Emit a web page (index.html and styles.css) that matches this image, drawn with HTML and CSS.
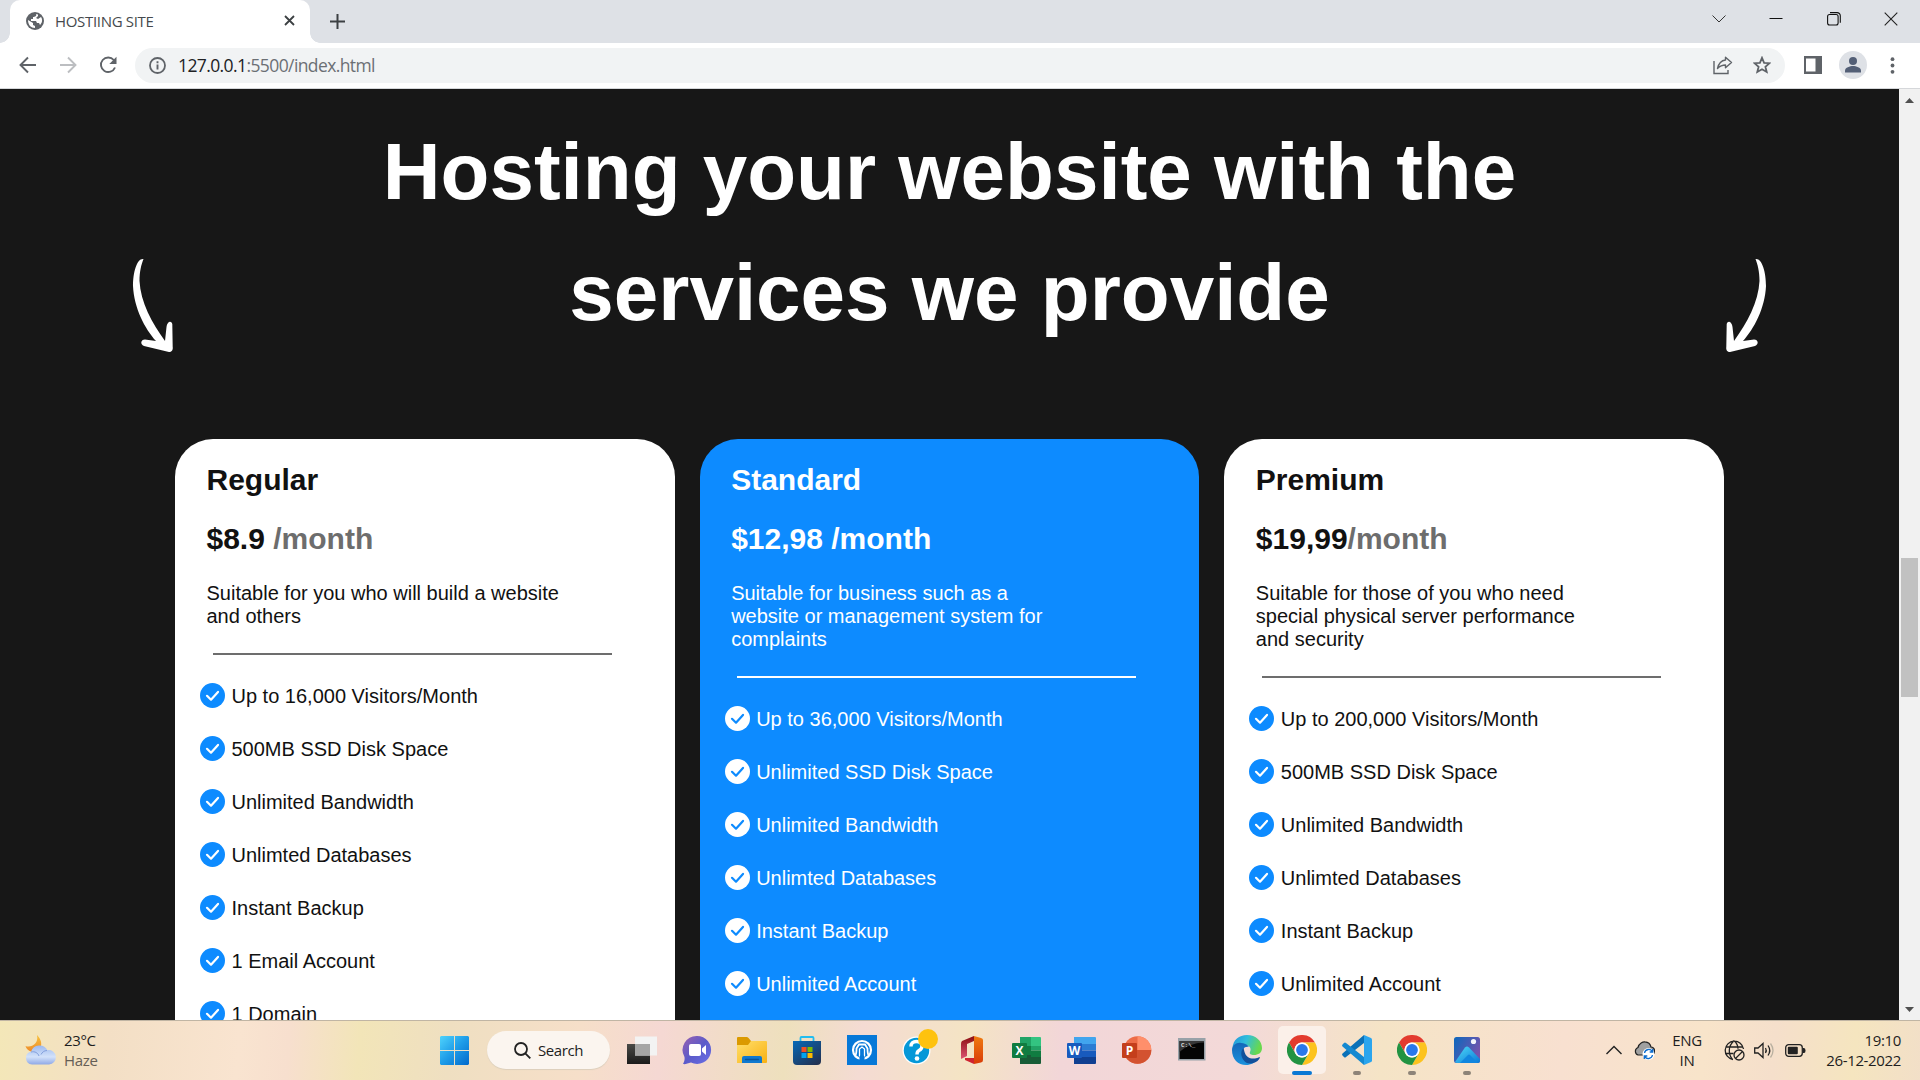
FILE: index.html
```html
<!DOCTYPE html>
<html lang="en">
<head>
<meta charset="utf-8">
<title>HOSTIING SITE</title>
<link rel="stylesheet" href="styles.css">
</head>
<body>
<svg width="0" height="0" class="defs">
  <symbol id="check" viewBox="0 0 25 25"><circle cx="12.500" cy="12.500" r="12.500" fill="var(--disc)"/><path d="M7 12.800l4 3.900 7-7.800" fill="none" stroke="var(--tick)" stroke-width="2.200" stroke-linecap="round" stroke-linejoin="round"/></symbol>
  <symbol id="chrome" viewBox="0 0 30 30">
    <path d="M2 7.500A15 15 0 0 1 28 7.500H15A7.500 7.500 0 0 0 8.500 18.750Z" fill="#e33b2e"/>
    <path d="M28 7.500A15 15 0 0 1 15 30L21.500 18.750A7.500 7.500 0 0 0 15 7.500Z" fill="#fcc31e"/>
    <path d="M15 30A15 15 0 0 1 2 7.500L8.500 18.750A7.500 7.500 0 0 0 21.500 18.750Z" fill="#229342"/>
    <circle cx="15" cy="15" r="7.500" fill="#fff"/><circle cx="15" cy="15" r="5.900" fill="#2a78ea"/>
  </symbol>
  <symbol id="arrow" viewBox="0 0 90 130"><path d="M33.500 19C27 18 23 32 23 46C24 68 35 89 46 101L35 99.500C30.500 99.500 30 104.500 34 106L59 112C61.500 112 63.200 110 62.700 107L62.300 84C61 80 57 82 56.500 87L55 101C42 83 30.500 62 29.500 41C29.500 31 31.500 24 33.500 19Z" fill="#fff"/></symbol>
</svg>

<header class="tabstrip">
  <div class="tab">
    <svg class="favicon" width="18" height="18" viewBox="0 0 18 18"><circle cx="9" cy="9" r="9" fill="#5f6368"/><path d="M2 8l5 3v2l2 1v2C5 16 2 13 2 8ZM10 2c1 2-1 3-3 3v2H5v2h5l1 2h2l1 2c2-2 3-5 1-8l-3 2-2-1 2-2V2.500Z" fill="#fff"/></svg>
    <span class="tab-title">HOSTIING SITE</span>
    <svg width="11" height="11" viewBox="0 0 11 11"><path d="M1 1l9 9M10 1l-9 9" stroke="#3c4043" stroke-width="1.800"/></svg>
  </div>
  <svg class="newtab" width="15" height="15" viewBox="0 0 15 15"><path d="M7.500 0v15M0 7.500h15" stroke="#3c4043" stroke-width="2"/></svg>
  <div class="winctl">
    <svg width="14" height="14" viewBox="0 0 14 14"><path d="M.5 3.500L7 10l6.500-6.500" fill="none" stroke="#333" stroke-width="1"/></svg>
    <svg width="14" height="14" viewBox="0 0 14 14"><path d="M.5 6.500h13" stroke="#111" stroke-width="1"/></svg>
    <svg width="14" height="14" viewBox="0 0 14 14"><rect x=".6" y="2.500" width="10.500" height="10.500" rx="2" fill="none" stroke="#111" stroke-width="1.100"/><path d="M3 .6h7a3.200 3.200 0 0 1 3.300 3.200v7" fill="none" stroke="#111" stroke-width="1.100"/></svg>
    <svg width="14" height="14" viewBox="0 0 14 14"><path d="M.7.700l12.600 12.600M13.300.700L.7 13.300" stroke="#222" stroke-width="1.100"/></svg>
  </div>
</header>

<nav class="toolbar">
  <div class="navbtns">
    <svg width="18" height="18" viewBox="0 0 18 18"><path d="M17 9H2M9 1.500L1.500 9 9 16.500" fill="none" stroke="#5f6368" stroke-width="1.900"/></svg>
    <svg width="18" height="18" viewBox="0 0 18 18"><path d="M1 9h15M9 1.500L16.500 9 9 16.500" fill="none" stroke="#bcbec1" stroke-width="1.900"/></svg>
    <svg width="18" height="18" viewBox="0 0 18 18"><path d="M14.800 4A7.300 7.300 0 1 0 16 11.500" fill="none" stroke="#5f6368" stroke-width="1.900"/><path d="M17.500.800V8h-7.200Z" fill="#5f6368"/></svg>
  </div>
  <div class="omnibox">
    <svg width="17" height="17" viewBox="0 0 17 17"><circle cx="8.500" cy="8.500" r="7.500" fill="none" stroke="#5f6368" stroke-width="1.800"/><path d="M8.500 7.500v5M8.500 4.300v2" stroke="#5f6368" stroke-width="1.900"/></svg>
    <span class="url"><b>127.0.0.1</b>:5500/index.html</span>
    <svg class="share" width="20" height="19" viewBox="0 0 20 19"><path d="M1 5v12.500h14V14" fill="none" stroke="#5f6368" stroke-width="1.400"/><path d="M12.500 1.200L18.500 6.500l-6 5.300V9C9 9 7 10 4.500 12.500 5.500 8 8 4.500 12.500 4Z" fill="none" stroke="#5f6368" stroke-width="1.400" stroke-linejoin="round"/></svg>
    <svg width="18" height="18" viewBox="0 0 18 18"><path d="M9 1.800l2.100 5 5.400.400-4.100 3.500 1.300 5.300L9 13.200 4.300 16l1.300-5.300L1.500 7.200 6.900 6.800Z" fill="none" stroke="#5f6368" stroke-width="1.800"/></svg>
  </div>
  <svg class="panel" width="18" height="18" viewBox="0 0 18 18"><path d="M0 0h18v18H0ZM2 2.500v13h9.500v-13Z" fill="#5f6368" fill-rule="evenodd"/></svg>
  <svg class="avatar" width="28" height="28" viewBox="0 0 28 28"><circle cx="14" cy="14" r="14" fill="#dee1e6"/><circle cx="14" cy="10" r="4" fill="#535f76"/><path d="M6 21.500v-2c0-3 5-4.500 8-4.500s8 1.500 8 4.500v2Z" fill="#535f76"/></svg>
  <svg class="dots" width="5" height="17" viewBox="0 0 5 17"><g fill="#5f6368"><circle cx="2.500" cy="2.200" r="1.900"/><circle cx="2.500" cy="8.500" r="1.900"/><circle cx="2.500" cy="14.800" r="1.900"/></g></svg>
</nav>

<div class="viewport">
  <main class="page">
    <section class="hero">
      <svg class="arrow" width="90" height="130"><use href="#arrow"/></svg>
      <h1>Hosting your website with the<br>services we provide</h1>
      <svg class="arrow flip" width="90" height="130"><use href="#arrow"/></svg>
    </section>
    <section class="plans">
      <article class="card">
        <h2>Regular</h2>
        <p class="price">$8.9 <span>/month</span></p>
        <p class="desc">Suitable for you who will build a website<br>and others</p>
        <div class="rule"></div>
        <ul>
          <li><svg><use href="#check"/></svg><span>Up to 16,000 Visitors/Month</span></li>
          <li><svg><use href="#check"/></svg><span>500MB SSD Disk Space</span></li>
          <li><svg><use href="#check"/></svg><span>Unlimited Bandwidth</span></li>
          <li><svg><use href="#check"/></svg><span>Unlimted Databases</span></li>
          <li><svg><use href="#check"/></svg><span>Instant Backup</span></li>
          <li><svg><use href="#check"/></svg><span>1 Email Account</span></li>
          <li><svg><use href="#check"/></svg><span>1 Domain</span></li>
        </ul>
      </article>
      <article class="card featured">
        <h2>Standard</h2>
        <p class="price">$12,98 <span>/month</span></p>
        <p class="desc">Suitable for business such as a<br>website or management system for<br>complaints</p>
        <div class="rule"></div>
        <ul>
          <li><svg><use href="#check"/></svg><span>Up to 36,000 Visitors/Month</span></li>
          <li><svg><use href="#check"/></svg><span>Unlimited SSD Disk Space</span></li>
          <li><svg><use href="#check"/></svg><span>Unlimited Bandwidth</span></li>
          <li><svg><use href="#check"/></svg><span>Unlimted Databases</span></li>
          <li><svg><use href="#check"/></svg><span>Instant Backup</span></li>
          <li><svg><use href="#check"/></svg><span>Unlimited Account</span></li>
        </ul>
      </article>
      <article class="card">
        <h2>Premium</h2>
        <p class="price">$19,99<span>/month</span></p>
        <p class="desc">Suitable for those of you who need<br>special physical server performance<br>and security</p>
        <div class="rule"></div>
        <ul>
          <li><svg><use href="#check"/></svg><span>Up to 200,000 Visitors/Month</span></li>
          <li><svg><use href="#check"/></svg><span>500MB SSD Disk Space</span></li>
          <li><svg><use href="#check"/></svg><span>Unlimited Bandwidth</span></li>
          <li><svg><use href="#check"/></svg><span>Unlimted Databases</span></li>
          <li><svg><use href="#check"/></svg><span>Instant Backup</span></li>
          <li><svg><use href="#check"/></svg><span>Unlimited Account</span></li>
        </ul>
      </article>
    </section>
  </main>
  <div class="scrollbar">
    <svg width="9" height="5" viewBox="0 0 9 5"><path d="M4.500 0L9 5H0Z" fill="#505050"/></svg>
    <div class="thumb"></div>
    <svg width="9" height="5" viewBox="0 0 9 5"><path d="M4.500 5L9 0H0Z" fill="#505050"/></svg>
  </div>
</div>

<footer class="taskbar">
  <div class="weather">
    <svg width="31" height="30" viewBox="0 0 31 30"><defs><linearGradient id="cl" x2="0" y2="1"><stop stop-color="#9db9ee"/><stop offset=".6" stop-color="#d3e2fa"/><stop offset="1" stop-color="#8fa9e6"/></linearGradient><linearGradient id="mo" x2="0" y2="1"><stop stop-color="#f8c13a"/><stop offset="1" stop-color="#ec8a2b"/></linearGradient></defs><path d="M12 0c3 3 5 7 4 11-1 4-5 6-9 6-3-1-6-3-6.500-6C6 13 14 9 12 0Z" fill="url(#mo)"/><path d="M7 29.500a6.500 6.500 0 0 1-1-12.800A9 9 0 0 1 22.500 15.200 7.200 7.200 0 1 1 24 29.500Z" fill="url(#cl)"/><path d="M6 17c4-1 7 1 8 4M22 15.500c-3 0-5 2-6 4" fill="none" stroke="#84a0dc"/></svg>
    <div class="wtext"><span>23°C</span><span class="muted">Haze</span></div>
  </div>
  <svg class="start" width="29" height="29" viewBox="0 0 29 29"><defs><linearGradient id="wn" x2="1" y2="1"><stop stop-color="#4fd3fc"/><stop offset=".5" stop-color="#1e9ce8"/><stop offset="1" stop-color="#0269cb"/></linearGradient></defs><path d="M1 0h13v14H0V1ZM15 0h13l1 1v13H15ZM0 15h14v14H1l-1-1ZM15 15h14v13l-1 1H15Z" fill="url(#wn)"/></svg>
  <div class="search"><svg width="17" height="17" viewBox="0 0 17 17"><circle cx="7" cy="7" r="6" fill="none" stroke="#222" stroke-width="1.800"/><path d="M11.300 11.300l5 5" stroke="#222" stroke-width="1.900"/></svg><span>Search</span></div>
  <div class="apps">
    <div class="app"><svg viewBox="0 0 30 30"><defs><linearGradient id="tv" x2="0" y2="1"><stop stop-color="#4a4a47"/><stop offset="1" stop-color="#1b1b1b"/></linearGradient></defs><path d="M0 9h23v20H0Z" fill="url(#tv)"/><path d="M8 1.500h22v19H8Z" fill="#f3f3f3"/><path d="M8 9h15v11.500H8Z" fill="#a5a5a5"/></svg></div>
    <div class="app"><svg viewBox="0 0 30 30"><defs><linearGradient id="ch" x2="1" y2="1"><stop stop-color="#9a5fb0"/><stop offset=".5" stop-color="#5b5bc9"/><stop offset="1" stop-color="#6a6fe8"/></linearGradient></defs><path d="M15 1A14 14 0 1 1 9 27.600C6 28.500 3 29.500 1 29c1-2 2-4 1.500-7A14 14 0 0 1 15 1Z" fill="url(#ch)"/><rect x="7" y="9" width="12" height="12" rx="2" fill="#fff"/><path d="M20 13.500l4-3.500v10l-4-3.500Z" fill="#fff"/></svg></div>
    <div class="app"><svg viewBox="0 0 30 30"><defs><linearGradient id="fo" x2="1" y2="1"><stop stop-color="#ffdf6b"/><stop offset="1" stop-color="#f9b112"/></linearGradient></defs><path d="M0 3q0-1 1-1h9q1 0 2 1.500L14 6v6H0Z" fill="#db9a00"/><path d="M0 10h11l3-4h15q1 0 1 1v20q0 1-1 1H0Z" fill="url(#fo)"/><path d="M5 28v-5q0-2 2-2h16q2 0 2 2v5Z" fill="#0f79cf"/><path d="M8.500 24.500h13" stroke="#07559b" stroke-width="1.300" stroke-linecap="round"/></svg></div>
    <div class="app"><svg viewBox="0 0 30 30"><defs><linearGradient id="st" x2=".8" y2="1"><stop stop-color="#0669b8"/><stop offset="1" stop-color="#223253"/></linearGradient></defs><path d="M8.500 7V3q0-1 1-1h11q1 0 1 1v4" fill="none" stroke="#22bdf0" stroke-width="1.800"/><path d="M1 6h28v20q0 4-4 4H5q-4 0-4-4Z" fill="url(#st)"/><path d="M9.500 12h5v5h-5Z" fill="#f25022"/><path d="M15.500 12h5v5h-5Z" fill="#7fba00"/><path d="M9.500 18h5v5h-5Z" fill="#00a4ef"/><path d="M15.500 18h5v5h-5Z" fill="#ffb900"/></svg></div>
    <div class="app"><svg viewBox="0 0 30 30"><path d="M0 0h30v30H0Z" fill="#0678d8"/><circle cx="15" cy="15" r="9" fill="none" stroke="#fff" stroke-width="2.200"/><path d="M8.500 20c1-1.500 1-4 1-6.500L12 9.500h6l2.500 4c0 2.500 0 5 1 6.500" fill="none" stroke="#fff" stroke-width="1.800"/><path d="M12.500 22v-8l2.500-2 2.500 2v8" fill="none" stroke="#fff" stroke-width="1.300"/><path d="M12.500 21.500l2.500-2.500 2.500 2.500V26h-5Z" fill="#0678d8"/></svg></div>
    <div class="app"><svg viewBox="0 0 30 30"><circle cx="14.500" cy="15.500" r="14" fill="#fff"/><circle cx="14.500" cy="15.500" r="12.700" fill="#0598d8"/><path d="M9 11.500Q9 6.500 14.500 6.500T20 11q0 3-3 4.500-2 1-2 4" fill="none" stroke="#fff" stroke-width="3.400"/><circle cx="15" cy="23.500" r="2.300" fill="#fff"/><circle cx="26" cy="4" r="10" fill="#fec20f"/></svg></div>
    <div class="app"><svg viewBox="0 0 30 30"><defs><linearGradient id="of" x2="0" y2="1"><stop stop-color="#8b0d10"/><stop offset="1" stop-color="#dc5473"/></linearGradient><linearGradient id="og" x2="0" y2="1"><stop stop-color="#ef7c10"/><stop offset="1" stop-color="#d93b08"/></linearGradient></defs><path d="M5 6L17 1v5l-7 3v12l-6 3V9q0-2 1-3Z" fill="url(#of)"/><path d="M17 1l7 2q2 .5 2 2v20q0 2-2 2.500L17 29Z" fill="url(#og)"/><path d="M8 23h9v6L8 25Z" fill="#cf2431"/></svg></div>
    <div class="app"><svg viewBox="0 0 30 30"><path d="M8 2h11v9H8Z" fill="#21a366"/><path d="M19 2h9q1 0 1 1v8H19Z" fill="#33c481"/><path d="M8 11h11v9H8Z" fill="#107c41"/><path d="M19 11h10v4.500H19Z" fill="#21a366"/><path d="M8 20h21v8q0 1-1 1H8Z" fill="#185c37"/><path d="M19 15.500h10V22H19Z" fill="#107c41"/><rect y="8" width="15" height="15" rx="1" fill="#107c41"/><text x="7.500" y="19.500" class="glyph">X</text></svg></div>
    <div class="app"><svg viewBox="0 0 30 30"><path d="M7 2h21q1 0 1 1v6H7Z" fill="#41a5ee"/><path d="M7 9h22v6.500H7Z" fill="#2b7cd3"/><path d="M7 15.500h22V22H7Z" fill="#185abd"/><path d="M7 22h22v6q0 1-1 1H7Z" fill="#103f91"/><rect y="8" width="15" height="15" rx="1" fill="#185abd"/><text x="7.500" y="19.500" class="glyph">W</text></svg></div>
    <div class="app"><svg viewBox="0 0 30 30"><circle cx="15.500" cy="15" r="13.800" fill="#ed6c47"/><path d="M15.500 1.200A13.800 13.800 0 0 1 29.300 15H15.500Z" fill="#ff8f6b"/><path d="M1.700 15h27.600A13.800 13.800 0 0 1 1.700 15Z" fill="#d35230"/><rect y="8" width="15" height="15" rx="1" fill="#c43e1c"/><text x="7.500" y="19.500" class="glyph">P</text></svg></div>
    <div class="app"><svg viewBox="0 0 30 30"><rect x="1" y="3" width="27.500" height="22.500" fill="#98a1a8"/><path d="M2.500 6h24.500v18H2.500Z" fill="#050505"/><path d="M2.500 6h24.500v1.500C17 8 9 11 2.500 17Z" fill="#383838"/><text x="4" y="12" class="prompt">C:\_</text></svg></div>
    <div class="app"><svg viewBox="0 0 30 30"><defs><linearGradient id="e1" x2="1" y2=".3"><stop stop-color="#2093dc"/><stop offset=".5" stop-color="#31bedb"/><stop offset="1" stop-color="#68d84e"/></linearGradient><linearGradient id="e2" x2="0" y2="1"><stop stop-color="#1467b8"/><stop offset="1" stop-color="#1b91dd"/></linearGradient></defs><path d="M.5 13C1 5 7 0 15 0c9 0 15 6 15 13 0 5-4 7-8 7-3 0-5-1-4-3 2-4-1-7-5-7C7 8 2 9 .5 13Z" fill="url(#e1)"/><path d="M0 15c0-5 5-8 9-7 3 0 6 1 8 4-5-1-7 3-6 7 2 6 9 7 15 4-3 5-7 7-12 7C6 30 0 24 0 15Z" fill="url(#e2)"/><path d="M11.500 13c-3 3-3 8 0 12 3 5 10 4 14 1 2-2 3-4 2-4-6 3-13 2-15-5Z" fill="#12509b"/></svg></div>
    <div class="app active"><svg><use href="#chrome"/></svg><i></i></div>
    <div class="app"><svg viewBox="0 0 30 30"><path d="M22 0v8L4 22q-1 1-2 0l-1.500-1.500q-1-1 0-2Z" fill="#0b71b8"/><path d="M22 30v-8L4 8Q3 7 2 8L.5 9.500q-1 1 0 2Z" fill="#1489d1"/><path d="M22 0l7 3q1 .5 1 1.500v21q0 1-1 1.500l-7 3Z" fill="#2aa5ee"/></svg><i></i></div>
    <div class="app"><svg><use href="#chrome"/></svg><i></i></div>
    <div class="app"><svg viewBox="0 0 30 30"><defs><linearGradient id="ph" x2="1" y2=".5"><stop stop-color="#0b68bd"/><stop offset="1" stop-color="#7454ad"/></linearGradient><linearGradient id="pm" x2="1" y2="1"><stop stop-color="#4fdcf8"/><stop offset="1" stop-color="#0a78d8"/></linearGradient></defs><rect x="2" y="2" width="26" height="26" rx="2.500" fill="url(#ph)"/><path d="M3 27L13 12.500q2-2 4 0L28 24v2q0 2-2 2H5q-1 0-2-1Z" fill="url(#pm)"/><path d="M8 28l8-8q1-1 2 0l8 8Z" fill="#1186df"/><circle cx="21.500" cy="6.500" r="2.600" fill="#f2f4fa"/></svg><i></i></div>
  </div>
  <div class="tray">
    <svg class="up" width="16" height="10" viewBox="0 0 16 10"><path d="M.5 9L8 1.500 15.500 9" fill="none" stroke="#222" stroke-width="1.400"/></svg>
    <svg class="cloud" width="21" height="19" viewBox="0 0 21 19"><path d="M4 14a4 4 0 0 1 0-7.500C5 2 9 .7 11 .9c4 .3 5.500 3 6 5.100 3 0 4 3 3.500 6L17 14Z" fill="#a0a0a0" stroke="#222" stroke-width="1.200"/><circle cx="14.500" cy="13" r="6" fill="#fff"/><path d="M10.500 12a4.200 4.200 0 0 1 8-1M18.500 14a4.200 4.200 0 0 1-8 1M18.700 8v3h-3M10.300 18v-3h3" fill="none" stroke="#0b6ccf" stroke-width="1.300"/></svg>
    <div class="lang"><span>ENG</span><span>IN</span></div>
    <svg class="globe" width="21" height="21" viewBox="0 0 21 21"><g fill="none" stroke="#222" stroke-width="1.300"><path d="M9 19.500A9.200 9.200 0 1 1 19.500 9M1.500 7h17M1.500 13.500h8M10 .800C4 6 4 14 8.500 19.500M10 .800c2.500 2 4 5 4 8"/><circle cx="15" cy="15" r="5"/><path d="M11.500 18.500l7-7"/></g></svg>
    <svg class="speaker" width="20" height="17" viewBox="0 0 20 17"><g fill="none" stroke="#222" stroke-width="1.300"><path d="M.7 6v5H4l5 4.500v-14L4 6Z"/><path d="M11.500 6q1.500 2.500 0 5M14 3.500q3.500 5 0 10"/><path d="M16.500 1.500q5 7 0 14" stroke="#b9b0a0"/></g></svg>
    <svg class="battery" width="21" height="13" viewBox="0 0 21 13"><rect x=".7" y=".7" width="16.600" height="11.600" rx="3" fill="none" stroke="#222" stroke-width="1.300"/><rect x="2.800" y="2.800" width="10" height="7.400" rx="1" fill="#222"/><path d="M18 4h1q1.500 0 1.500 2.500T19 9h-1Z" fill="#222"/></svg>
    <div class="clock"><span>19:10</span><span>26-12-2022</span></div>
  </div>
</footer>
</body>
</html>
```
FILE: styles.css
```css
* { box-sizing: border-box; }
body {
  margin: 0;
  width: 1920px;
  height: 1080px;
  overflow: hidden;
  display: flex;
  flex-direction: column;
  font-family: "Open Sans", "Noto Sans", sans-serif;
}
svg { display: block; flex: none; }
.defs { position: absolute; }

/* Browser frame */
.tabstrip { height: 43px; flex: none; background: #dee1e6; display: flex; padding-left: 10px; }
.tab {
  position: relative;
  width: 300px;
  height: 43px;
  padding: 0 15px 2px 16px;
  display: flex;
  align-items: center;
  background: #fff;
  border-radius: 10px 10px 0 0;
}
.tab::before, .tab::after {
  content: "";
  position: absolute;
  bottom: 0;
  width: 10px;
  height: 10px;
}
.tab::before { left: -10px; background: radial-gradient(circle at 0 0, #dee1e6 9.500px, #fff 10px); }
.tab::after { right: -10px; background: radial-gradient(circle at 100% 0, #dee1e6 9.500px, #fff 10px); }
.tab-title { flex: 1; margin-left: 11px; font-size: 15px; letter-spacing: -0.320px; color: #45494d; }
.newtab { margin: 14px 0 0 20px; }
.winctl { margin: 12px 22px 0 auto; display: flex; gap: 43.500px; }
.toolbar {
  height: 46px;
  flex: none;
  display: flex;
  align-items: center;
  padding: 0 25px 1px 19px;
  background: #fff;
  border-bottom: 1px solid #d5d7da;
}
.navbtns { display: flex; gap: 22px; width: 116px; }
.omnibox {
  width: 1650px;
  height: 35px;
  border-radius: 18px;
  background: #f1f3f4;
  display: flex;
  align-items: center;
  padding: 0 14px;
}
.url { flex: 1; margin-left: 12px; font-size: 17.500px; letter-spacing: -0.600px; color: #6b6f74; }
.url b { font-weight: 400; color: #202124; }
.share { margin-right: 20px; }
.panel { margin-left: 19px; }
.avatar { margin-left: 17px; }
.dots { margin-left: 23px; }

/* Page */
.viewport { height: 931px; flex: none; display: flex; overflow: hidden; }
.page { width: 1899px; background: #171717; font-family: "Liberation Sans", Arial, sans-serif; color: #111; }
.hero {
  height: 350px;
  padding: 22px 110px 0;
  display: flex;
  justify-content: space-between;
}
.hero h1 { margin: 0; font-size: 80px; line-height: 121px; text-align: center; color: #fff; }
.arrow { margin-top: 129px; }
.flip { transform: scaleX(-1); }
.plans { display: grid; grid-template-columns: repeat(3, 1fr); gap: 25px; padding: 0 175px; }
.card {
  --disc: #0d8bff;
  --tick: #fff;
  height: 700px;
  padding: 24px 25px 0;
  border-radius: 38px;
  background: #fff;
}
.featured { --disc: #fff; --tick: #0d8bff; background: #0d8bff; color: #fff; }
.card h2, .card p { margin: 0 0 25px 6.500px; }
.card h2, .card .price { font-size: 30px; font-weight: 700; line-height: 34px; }
.card .price { margin-bottom: 26px; }
.price span { color: #6d6d6d; }
.featured .price span { color: #fff; }
.card .desc { font-size: 20px; line-height: 23px; }
.rule { width: 399px; height: 2px; margin-left: 12.700px; background: #6d6d6d; }
.featured .rule { background: #fff; }
.card ul { list-style: none; margin: 28px 0 0; padding: 0; font-size: 20px; line-height: 25px; }
.card li { display: flex; gap: 6.500px; margin-bottom: 28px; }
.card li span { padding-top: 1px; height: 25px; }
.card li svg { width: 25px; height: 25px; }
.scrollbar {
  width: 21px;
  background: #f1f1f1;
  display: flex;
  flex-direction: column;
  align-items: center;
  padding: 9px 0 8px;
}
.thumb { width: 17px; height: 139px; margin: 455px 0 auto; background: #c1c1c1; }

/* Taskbar */
.taskbar {
  height: 60px;
  flex: none;
  display: flex;
  align-items: center;
  border-top: 1px solid #c0b5a4;
  padding-bottom: 1px;
  background: linear-gradient(95deg, #f3e7b8 0, #f3dfc5 110px, #f9e4d0 240px, #f7dfce 290px, #f2e5b8 360px, #efdfc1 450px, #f6dfc9 580px, #f5d8d3 660px, #eee0bd 785px, #f4dbd3 860px, #f4e4c4 965px, #f2d6d8 1060px, #f3d9d8 1240px, #f5e4c6 1380px, #f8e0d0 1560px, #f8e4ca 1700px, #f5dfcb 1770px, #f5e5bf 1850px, #f2dfc8 1920px);
  font-size: 15px;
  color: #1e1e1e;
}
.weather { display: flex; align-items: center; width: 440px; padding-left: 25px; gap: 8px; }
.wtext, .lang, .clock { display: flex; flex-direction: column; line-height: 20px; letter-spacing: -0.350px; padding-bottom: 1px; }
.muted { color: #655e55; }
.search {
  width: 123px;
  height: 38px;
  margin-left: 18px;
  display: flex;
  align-items: center;
  justify-content: center;
  gap: 7px;
  border-radius: 19px;
  background: #fbf5ef;
  box-shadow: 0 1px 1px #dccfbc;
}
.search span { font-size: 15px; letter-spacing: -0.400px; }
.apps { display: flex; margin-left: 4px; }
.app {
  position: relative;
  width: 55px;
  height: 58px;
  display: flex;
  align-items: center;
  justify-content: center;
}
.app svg { width: 30px; height: 30px; overflow: visible; }
.app i {
  position: absolute;
  left: 23.500px;
  bottom: 4px;
  width: 8px;
  height: 4px;
  border-radius: 2px;
  background: #8d8378;
}
.active::before {
  content: "";
  position: absolute;
  left: 3.500px;
  top: 5px;
  width: 48px;
  height: 48px;
  border-radius: 5px;
  background: #fbf0e9;
}
.active svg { position: relative; }
.active i { left: 17.500px; width: 20px; background: #0a78d4; }
.glyph { font: 700 12px "Open Sans", sans-serif; fill: #fff; text-anchor: middle; }
.prompt { font: 700 6px "Liberation Mono", monospace; fill: #ddd; }
.tray { display: flex; align-items: center; margin-left: auto; padding-right: 19px; }
.cloud { margin-left: 12px; }
.lang { width: 40px; margin-left: 12px; align-items: center; }
.globe { margin-left: 17px; }
.speaker { margin-left: 9px; }
.battery { margin-left: 11px; }
.clock { width: 80px; margin-left: 15px; align-items: flex-end; }
```
